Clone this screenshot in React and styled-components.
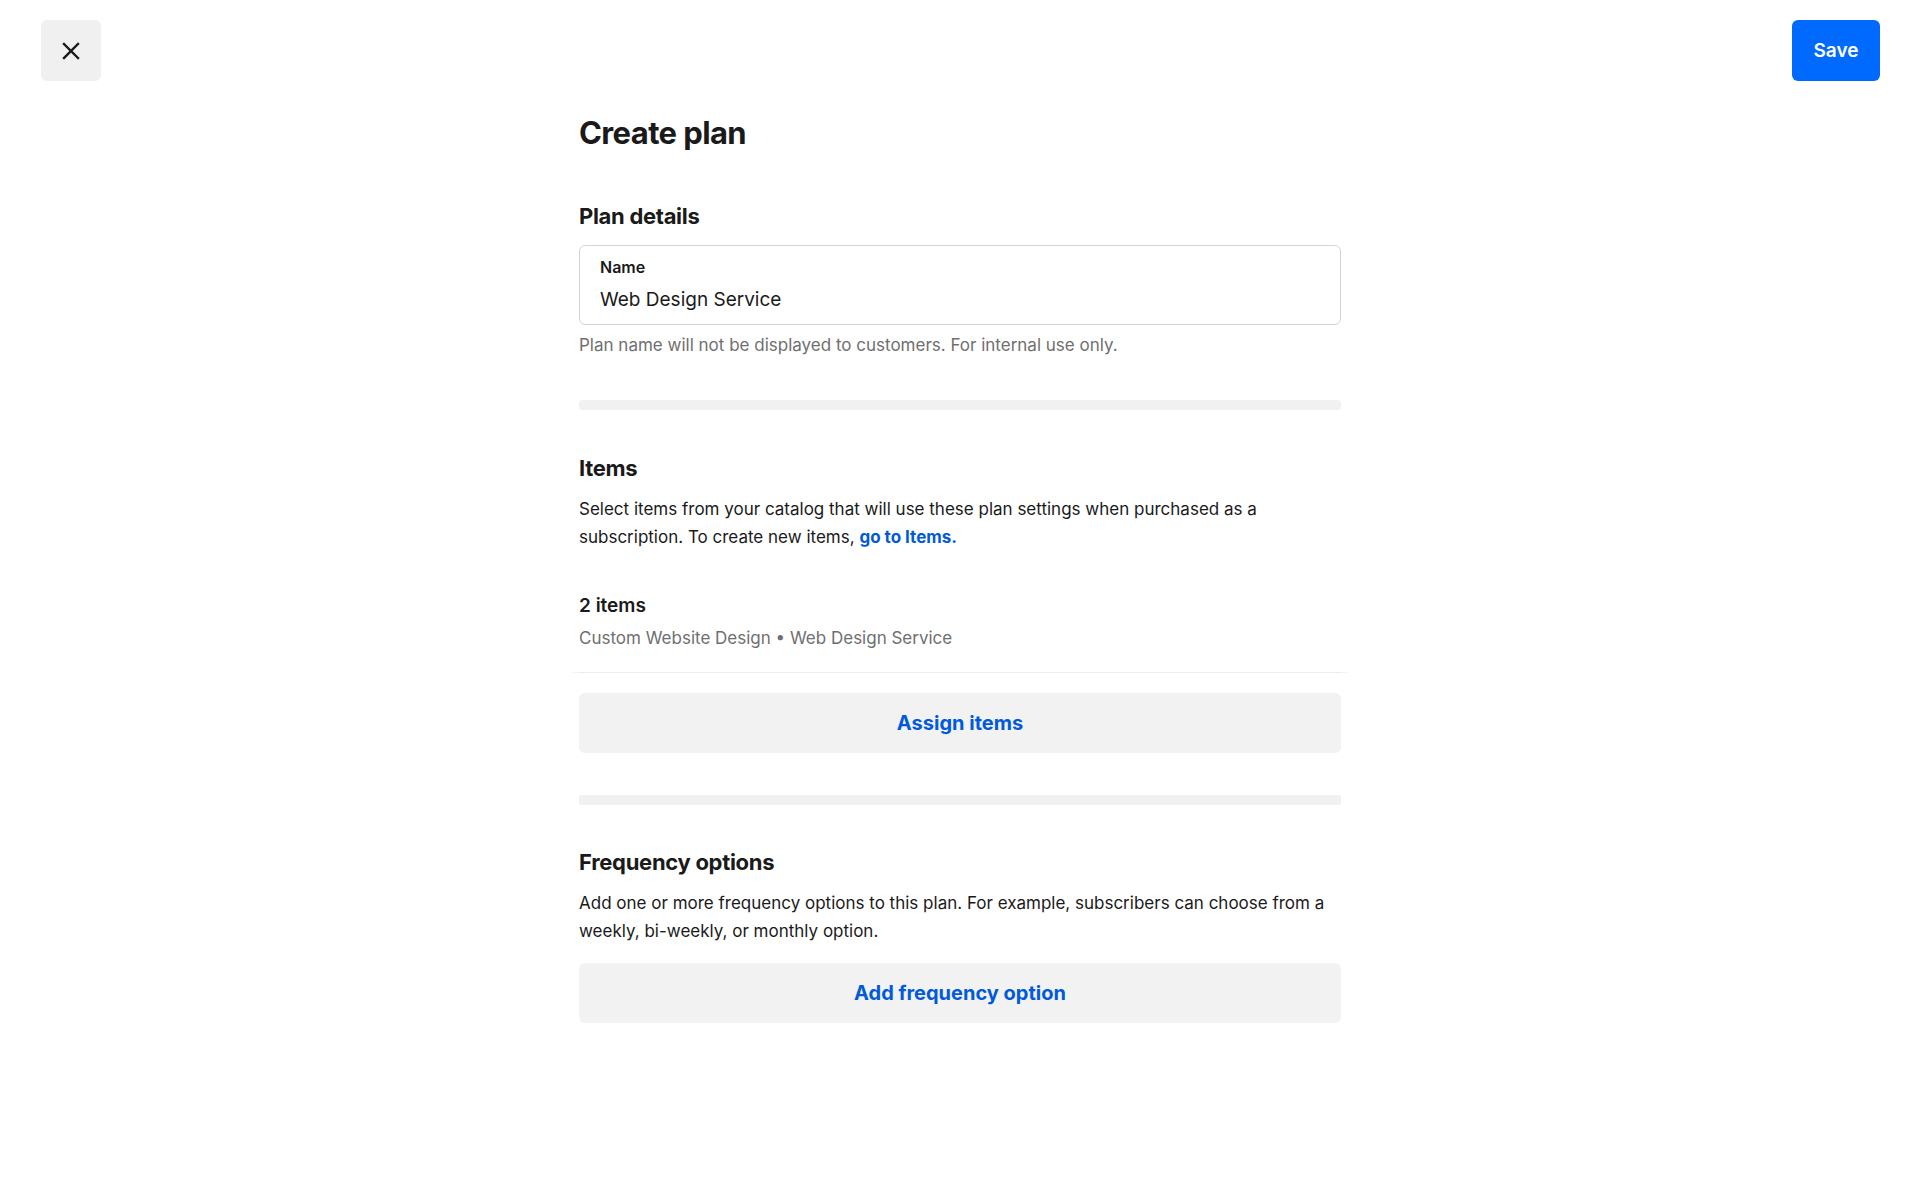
import React from "react";
import styled, { createGlobalStyle } from "styled-components";

const GlobalStyle = createGlobalStyle`
  * {
    box-sizing: border-box;
  }
  body {
    margin: 0;
    background: #ffffff;
    color: #1a1a1a;
    font-family: Inter, Roboto, "Liberation Sans", sans-serif;
  }
`;

const PageBlock = styled.div`
  min-height: 1200px;
  background: #ffffff;
`;

const TopBar = styled.header`
  display: flex;
  justify-content: space-between;
  align-items: center;
  padding: 20px 40px 0 41px;
`;

const CloseButton = styled.button`
  width: 60px;
  height: 61px;
  border: none;
  border-radius: 6px;
  background: #f0f0f0;
  display: flex;
  align-items: center;
  justify-content: center;
  cursor: pointer;
  padding: 0;
`;

const SaveButton = styled.button`
  width: 88px;
  height: 61px;
  border: none;
  border-radius: 6px;
  background: #006aff;
  color: #ffffff;
  font-family: inherit;
  font-size: 19px;
  font-weight: 600;
  cursor: pointer;
`;

const Main = styled.main`
  width: 762px;
  margin: 0 auto;
  display: flex;
  flex-direction: column;
`;

const Title = styled.h1`
  margin: 32px 0 0;
  font-size: 31px;
  line-height: 40px;
  font-weight: 700;
  letter-spacing: -0.6px;
`;

const SectionTitle = styled.h2`
  margin: ${(p) => p.$top}px 0 0;
  font-size: 22px;
  line-height: 30px;
  font-weight: 700;
  letter-spacing: -0.3px;
`;

const Field = styled.label`
  display: flex;
  flex-direction: column;
  margin-top: 14px;
  height: 80px;
  border: 1px solid #d4d4d4;
  border-radius: 6px;
  padding: 10px 20px 0;
`;

const FieldLabel = styled.span`
  font-size: 16px;
  line-height: 22px;
  font-weight: 600;
  color: #1a1a1a;
`;

const FieldInput = styled.input`
  margin-top: 8px;
  border: none;
  outline: none;
  padding: 0;
  font-family: inherit;
  font-size: 19px;
  line-height: 28px;
  color: #1a1a1a;
  background: transparent;
`;

const Helper = styled.p`
  margin: ${(p) => p.$top || 0}px 0 0;
  font-size: 17px;
  line-height: 24px;
  color: #6f6f6f;
`;

const Divider = styled.div`
  margin-top: ${(p) => p.$top}px;
  height: 10px;
  border-radius: 3px;
  background: #f1f1f1;
`;

const Paragraph = styled.p`
  margin: ${(p) => p.$top}px 0 0;
  font-size: 17px;
  line-height: 28px;
  color: #1a1a1a;
`;

const Link = styled.a`
  color: #005ad9;
  font-weight: 700;
  text-decoration: none;
`;

const Count = styled.div`
  margin-top: 41px;
  font-size: 19px;
  line-height: 28px;
  font-weight: 600;
`;

const Rule = styled.hr`
  margin: 22px -10px 0;
  border: none;
  height: 1px;
  background: linear-gradient(
    to right,
    rgba(235, 235, 235, 0),
    #ececec 12px,
    #ececec calc(100% - 12px),
    rgba(235, 235, 235, 0)
  );
`;

const WideButton = styled.button`
  margin-top: ${(p) => p.$top}px;
  height: 60px;
  width: 100%;
  border: none;
  border-radius: 6px;
  background: #f2f2f2;
  color: #005ad9;
  font-family: inherit;
  font-size: 20px;
  font-weight: 700;
  cursor: pointer;
`;

const CloseIcon = () => (
  <svg width="18" height="18" viewBox="0 0 18 18" fill="none">
    <path
      d="M2 2L16 16M16 2L2 16"
      stroke="#1a1a1a"
      strokeWidth="2.4"
      strokeLinecap="square"
    />
  </svg>
);

const App = () => {
  return (
    <PageBlock>
      <GlobalStyle />
      <TopBar>
        <CloseButton aria-label="Close">
          <CloseIcon />
        </CloseButton>
        <SaveButton>Save</SaveButton>
      </TopBar>
      <Main>
        <Title>Create plan</Title>

        <SectionTitle $top={48}>Plan details</SectionTitle>
        <Field>
          <FieldLabel>Name</FieldLabel>
          <FieldInput defaultValue="Web Design Service" />
        </Field>
        <Helper $top={8}>
          Plan name will not be displayed to customers. For internal use only.
        </Helper>

        <Divider $top={43} />

        <SectionTitle $top={43}>Items</SectionTitle>
        <Paragraph $top={12}>
          Select items from your catalog that will use these plan settings when
          purchased as a subscription. To create new items,{" "}
          <Link href="#">go to Items.</Link>
        </Paragraph>
        <Count>2 items</Count>
        <Helper $top={6}>Custom Website Design • Web Design Service</Helper>
        <Rule />
        <WideButton $top={20}>Assign items</WideButton>

        <Divider $top={42} />

        <SectionTitle $top={42}>Frequency options</SectionTitle>
        <Paragraph $top={12}>
          Add one or more frequency options to this plan. For example,
          subscribers can choose from a weekly, bi-weekly, or monthly option.
        </Paragraph>
        <WideButton $top={18}>Add frequency option</WideButton>
      </Main>
    </PageBlock>
  );
};

export default App;
